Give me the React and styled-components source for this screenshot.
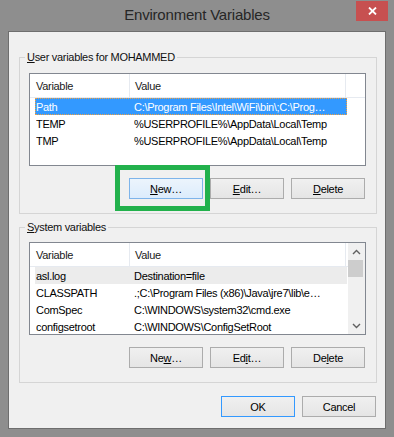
import React from 'react';
import styled, { createGlobalStyle } from 'styled-components';

const FONT = `"Liberation Sans", Arial, sans-serif`;

const GlobalStyle = createGlobalStyle`
  html, body { margin: 0; padding: 0; background: #8e8e8e; }
  body { font-family: ${FONT}; }
  * { box-sizing: border-box; }
`;

const Window = styled.div`
  width: 394px;
  height: 437px;
  background: #8e8e8e;
  display: flex;
  flex-direction: column;
  font-family: ${FONT};
  font-size: 11px;
  letter-spacing: -0.3px;
  color: #000;
`;

const TitleBar = styled.div`
  height: 31px;
  flex: none;
  display: grid;
  grid-template-columns: 1fr auto 1fr;
  align-items: start;
`;

const Title = styled.div`
  grid-column: 2;
  margin-top: 5px;
  font-size: 15px;
  line-height: 20px;
  letter-spacing: -0.2px;
  color: #262626;
`;

const CloseButton = styled.div`
  grid-column: 3;
  justify-self: end;
  margin: 1px 6px 0 0;
  width: 32px;
  height: 20px;
  background: #c75050;
  display: flex;
  align-items: center;
  justify-content: center;
`;

const Client = styled.div`
  flex: 1;
  margin: 0 8px 8px;
  border: 1px solid #6e6e6e;
  background: #f0f0f0;
  display: flex;
  flex-direction: column;
  padding: 17px 8px 0 10px;
`;

const Group = styled.fieldset`
  margin: ${p => p.$mt || 0}px 0 0 0;
  padding: 0 10px 14px 9px;
  border: 1px solid #d5d5d5;
  min-width: 0;
`;

const Legend = styled.legend`
  margin-left: -4px;
  padding: 0 2px;
  line-height: 16px;
  color: #111;
`;

const Key = styled.span`
  text-decoration: underline;
  text-underline-offset: 1px;
`;

const ListBox = styled.div`
  margin-top: ${p => p.$mt}px;
  height: 93px;
  border: 1px solid #828790;
  background: #fff;
  display: flex;
  overflow: hidden;
`;

const ListMain = styled.div`
  flex: 1;
  min-width: 0;
  display: flex;
  flex-direction: column;
`;

const Header = styled.div`
  height: 24px;
  flex: none;
  display: flex;
  border-bottom: 1px solid #e6eaf0;
`;

const HeaderCell = styled.div`
  width: ${p => p.$w}px;
  flex: none;
  padding-left: ${p => p.$pl}px;
  border-right: 1px solid #e6eaf0;
  display: flex;
  align-items: center;
  color: #1a1a1a;
`;

const Row = styled.div`
  height: 17px;
  flex: none;
  margin-left: 5px;
  width: 312px;
  display: flex;
  align-items: center;
  border: 1px ${p => (p.$selected ? 'dotted #f0a040' : 'solid transparent')};
  background: ${p => (p.$selected ? '#3399ff' : p.$hot ? '#ececec' : 'transparent')};
  color: ${p => (p.$selected ? '#fff' : '#000')};
  white-space: nowrap;
`;

const NameCell = styled.span`
  width: 98px;
  flex: none;
  overflow: hidden;
`;

const ValueCell = styled.span`
  flex: 1;
  min-width: 0;
  overflow: hidden;
  text-overflow: ellipsis;
`;

const ScrollBar = styled.div`
  width: 17px;
  flex: none;
  background: #f0f0f0;
  display: flex;
  flex-direction: column;
`;

const ScrollArrow = styled.div`
  height: 17px;
  flex: none;
  display: flex;
  align-items: center;
  justify-content: center;
`;

const Thumb = styled.div`
  height: 17px;
  flex: none;
  margin: 0 2px 0 0;
  background: #cdcdcd;
`;

const Track = styled.div`
  flex: 1;
`;

const ButtonRow = styled.div`
  display: flex;
  justify-content: flex-end;
  gap: 7px;
  margin-top: ${p => p.$mt}px;
  padding-right: 1px;
`;

const Button = styled.button`
  width: 74px;
  height: 21px;
  padding: 0;
  margin: 0;
  font-family: ${FONT};
  font-size: 11px;
  letter-spacing: -0.3px;
  color: #000;
  border: 1px solid
    ${p => (p.$variant === 'hover' ? '#7eb4ea' : p.$variant === 'default' ? '#3399ff' : '#acacac')};
  background: ${p =>
    p.$variant === 'hover'
      ? 'linear-gradient(#ecf4fc, #dcecfc)'
      : 'linear-gradient(#f0f0f0, #e5e5e5)'};
  display: flex;
  align-items: center;
  justify-content: center;
`;

const Annotated = styled.div`
  position: relative;
  display: flex;
`;

const Marker = styled.div`
  position: absolute;
  left: -14px;
  top: -13px;
  width: 95px;
  height: 46px;
  border: 5px solid #22b14c;
  pointer-events: none;
`;

const Chevron = ({ up }) => (
  <svg width="9" height="6" viewBox="0 0 9 6">
    <polyline
      points={up ? '1,5 4.5,1.5 8,5' : '1,1 4.5,4.5 8,1'}
      fill="none"
      stroke="#606060"
      strokeWidth="1.4"
    />
  </svg>
);

const userRows = [
  { name: 'Path', value: 'C:\\Program Files\\Intel\\WiFi\\bin\\;C:\\Prog\u2026', selected: true },
  { name: 'TEMP', value: '%USERPROFILE%\\AppData\\Local\\Temp' },
  { name: 'TMP', value: '%USERPROFILE%\\AppData\\Local\\Temp' },
];

const systemRows = [
  { name: 'asl.log', value: 'Destination=file', hot: true },
  { name: 'CLASSPATH', value: '.;C:\\Program Files (x86)\\Java\\jre7\\lib\\e\u2026' },
  { name: 'ComSpec', value: 'C:\\WINDOWS\\system32\\cmd.exe' },
  { name: 'configsetroot', value: 'C:\\WINDOWS\\ConfigSetRoot' },
];

const VarList = ({ rows, scroll, mt }) => (
  <ListBox $mt={mt}>
    <ListMain>
      <Header>
        <HeaderCell $w={100} $pl={6}>Variable</HeaderCell>
        <HeaderCell $w={216} $pl={5}>Value</HeaderCell>
      </Header>
      {rows.map(r => (
        <Row key={r.name} $selected={r.selected} $hot={r.hot}>
          <NameCell>{r.name}</NameCell>
          <ValueCell>{r.value}</ValueCell>
        </Row>
      ))}
    </ListMain>
    {scroll && (
      <ScrollBar>
        <ScrollArrow><Chevron up /></ScrollArrow>
        <Thumb />
        <Track />
        <ScrollArrow><Chevron /></ScrollArrow>
      </ScrollBar>
    )}
  </ListBox>
);

export default function App() {
  return (
    <>
      <GlobalStyle />
      <Window>
        <TitleBar>
          <Title>Environment Variables</Title>
          <CloseButton>
            <svg width="9" height="8" viewBox="0 0 9 8">
              <path d="M1 0.5 L8 7.5 M8 0.5 L1 7.5" stroke="#fff" strokeWidth="1.8" />
            </svg>
          </CloseButton>
        </TitleBar>
        <Client>
          <Group>
            <Legend><Key>U</Key>ser variables for MOHAMMED</Legend>
            <VarList rows={userRows} mt={8} />
            <ButtonRow $mt={12}>
              <Annotated>
                <Button $variant="hover"><Key>N</Key>ew…</Button>
                <Marker />
              </Annotated>
              <Button><Key>E</Key>dit…</Button>
              <Button><Key>D</Key>elete</Button>
            </ButtonRow>
          </Group>
          <Group $mt={5}>
            <Legend><Key>S</Key>ystem variables</Legend>
            <VarList rows={systemRows} scroll mt={7} />
            <ButtonRow $mt={12}>
              <Button>Ne<Key>w</Key>…</Button>
              <Button>Ed<Key>i</Key>t…</Button>
              <Button>De<Key>l</Key>ete</Button>
            </ButtonRow>
          </Group>
          <ButtonRow $mt={13}>
            <Button $variant="default">OK</Button>
            <Button>Cancel</Button>
          </ButtonRow>
        </Client>
      </Window>
    </>
  );
}
